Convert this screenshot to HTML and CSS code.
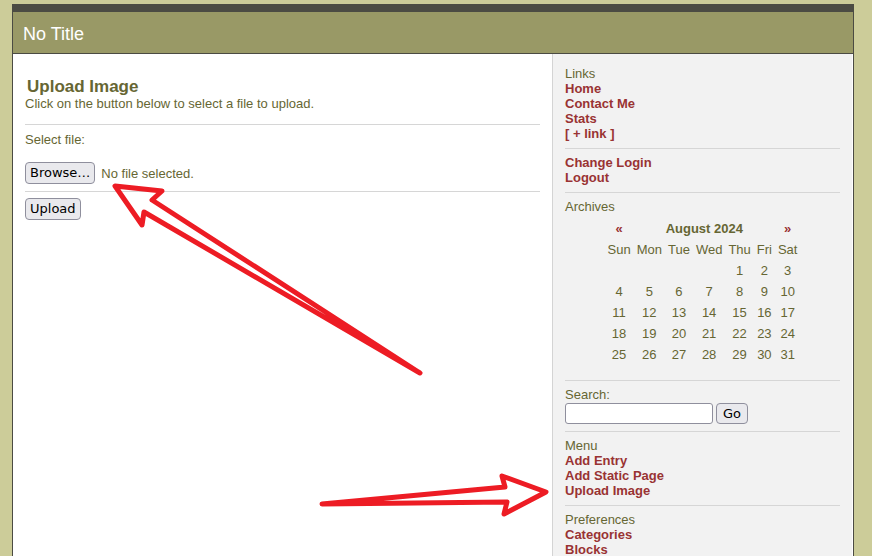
FILE: index.html
```html
<!DOCTYPE html>
<html>
<head>
<meta charset="utf-8">
<title>No Title</title>
<link rel="stylesheet" href="styles.css">
</head>
<body>
<div class="page">
  <div class="header">No Title</div>
  <div class="layout">
    <div class="main">
      <h2 class="title">Upload Image</h2>
      <div class="intro">Click on the button below to select a file to upload.</div>
      <div class="field-label">Select file:</div>
      <div class="file-row">
        <button class="btn">Browse…</button>
        <span class="file-status">No file selected.</span>
      </div>
      <div class="submit-row">
        <button class="btn">Upload</button>
      </div>
    </div>
    <div class="sidebar">
      <div class="block">
        <div class="block-title">Links</div>
        <a class="link" href="#">Home</a>
        <a class="link" href="#">Contact Me</a>
        <a class="link" href="#">Stats</a>
        <a class="link" href="#">[ + link ]</a>
      </div>
      <div class="block">
        <a class="link" href="#">Change Login</a>
        <a class="link" href="#">Logout</a>
      </div>
      <div class="block">
        <div class="block-title">Archives</div>
        <table class="cal">
          <tr>
            <td class="nav">«</td>
            <td class="month" colspan="5">August 2024</td>
            <td class="nav">»</td>
          </tr>
          <tr><td>Sun</td><td>Mon</td><td>Tue</td><td>Wed</td><td>Thu</td><td>Fri</td><td>Sat</td></tr>
          <tr><td></td><td></td><td></td><td></td><td>1</td><td>2</td><td>3</td></tr>
          <tr><td>4</td><td>5</td><td>6</td><td>7</td><td>8</td><td>9</td><td>10</td></tr>
          <tr><td>11</td><td>12</td><td>13</td><td>14</td><td>15</td><td>16</td><td>17</td></tr>
          <tr><td>18</td><td>19</td><td>20</td><td>21</td><td>22</td><td>23</td><td>24</td></tr>
          <tr><td>25</td><td>26</td><td>27</td><td>28</td><td>29</td><td>30</td><td>31</td></tr>
        </table>
      </div>
      <div class="block">
        <div class="block-title">Search:</div>
        <div class="search-row">
          <input class="search-input" type="text">
          <button class="btn go">Go</button>
        </div>
      </div>
      <div class="block">
        <div class="block-title">Menu</div>
        <a class="link" href="#">Add Entry</a>
        <a class="link" href="#">Add Static Page</a>
        <a class="link" href="#">Upload Image</a>
      </div>
      <div class="block last">
        <div class="block-title">Preferences</div>
        <a class="link" href="#">Categories</a>
        <a class="link" href="#">Blocks</a>
      </div>
    </div>
  </div>
</div>
<svg class="arrows" width="872" height="556" viewBox="0 0 872 556">
  <polygon points="115,186 162,191 152,200 420,373 144,212 142,225" fill="none" stroke="#ed1c24" stroke-width="5" stroke-linejoin="round"/>
  <polygon points="322,504 505,487 502,476 546,492 504,514 507,502" fill="none" stroke="#ed1c24" stroke-width="5" stroke-linejoin="round"/>
</svg>
</body>
</html>
```

FILE: styles.css
```css
html, body {
  margin: 0;
  padding: 0;
}
body {
  background: #cccc99;
  font-family: "Liberation Sans", Arial, sans-serif;
  font-size: 13px;
  color: #666633;
  padding-top: 4px;
  height: 552px;
  overflow: hidden;
  position: relative;
}
.page {
  margin-left: 12px;
  width: 840px;
  border: 1px solid #4b4b43;
  border-top: 8px solid #4b4b43;
  background: #ffffff;
}
.header {
  background: #999966;
  color: #ffffff;
  font-size: 18px;
  height: 38px;
  line-height: 38px;
  padding: 3px 0 0 10px;
  border-bottom: 1px solid #4b4b43;
}
.layout {
  display: flex;
  align-items: stretch;
  min-height: 510px;
}
.main {
  width: 515px;
  padding: 23px 12px 0 12px;
  background: #ffffff;
}
.title {
  margin: 0;
  padding-left: 2px;
  font-size: 17px;
  font-weight: bold;
  color: #666633;
  line-height: 19px;
}
.intro {
  padding-bottom: 13px;
  border-bottom: 1px solid #d6d6d6;
}
.field-label {
  margin-top: 7px;
}
.file-row {
  margin-top: 15px;
  display: flex;
  align-items: center;
  gap: 6px;
  padding-bottom: 7px;
  border-bottom: 1px solid #d6d6d6;
}
.submit-row {
  margin-top: 6px;
  display: flex;
}
.btn {
  font-family: "DejaVu Sans", sans-serif;
  font-size: 13px;
  color: #000000;
  background: #e9e9ed;
  border: 1px solid #8f8f9d;
  border-radius: 4px;
  height: 22px;
  padding: 0 4px;
  margin: 0;
  line-height: 20px;
}
.file-status {
  color: #666633;
}
.sidebar {
  width: 275px;
  padding: 12px 12px 0 12px;
  background: #f2f2f2;
  border-left: 1px solid #d4d4d4;
}
.block {
  padding-bottom: 7px;
  border-bottom: 1px solid #d6d6d6;
  margin-bottom: 6px;
}
.block.last {
  border-bottom: none;
  margin-bottom: 0;
  padding-bottom: 0;
}
.block-title {
  color: #666633;
}
.link {
  display: block;
  color: #993333;
  font-weight: bold;
  text-decoration: none;
}
.cal {
  margin: 3px auto 7px auto;
  border-spacing: 2px;
}
.cal td {
  padding: 2px;
  text-align: center;
  color: #666633;
  line-height: 15px;
}
.cal td.nav {
  color: #993333;
  font-weight: bold;
}
.cal td.month {
  font-weight: bold;
}
.search-row {
  display: flex;
  align-items: center;
  gap: 3px;
  margin-top: 1px;
}
.search-input {
  width: 144px;
  height: 19px;
  border: 1px solid #8f8f9d;
  border-radius: 3px;
  background: #ffffff;
  padding: 0 1px;
  margin: 0;
  box-sizing: content-box;
}
.btn.go {
  height: 21px;
  padding: 0 6px;
}
.arrows {
  position: absolute;
  left: 0;
  top: 0;
  pointer-events: none;
}
```
